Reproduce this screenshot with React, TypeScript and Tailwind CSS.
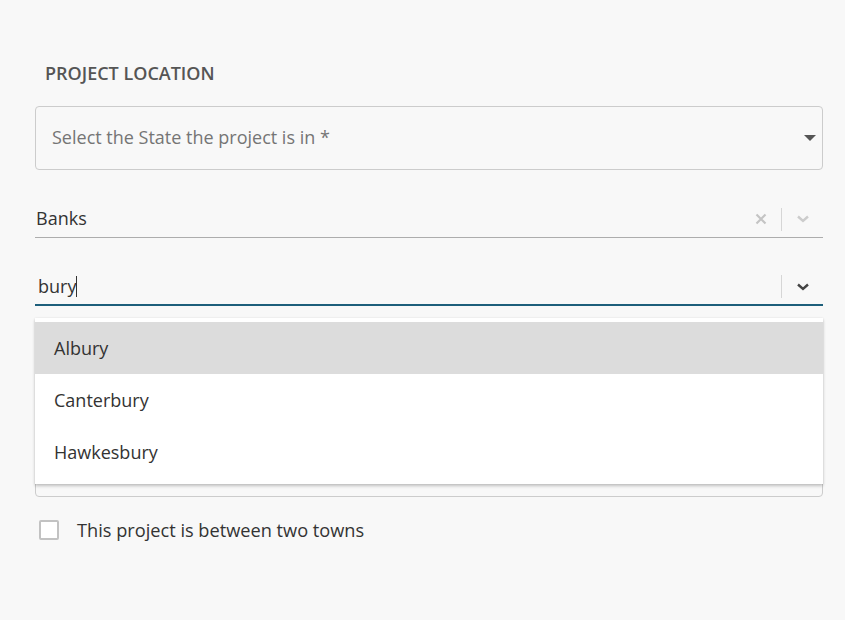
import React from "react";

const Chevron = ({ color }: { color: string }) => (
  <svg width="14" height="10" viewBox="0 0 14 10" fill="none">
    <path d="M2 2.5 L7 7 L12 2.5" stroke={color} strokeWidth="2.4" />
  </svg>
);

export default function App() {
  return (
    <div
      className="w-[845px] h-[620px] bg-[#f8f8f8] pl-[35px] pr-[22px] pt-[62px]"
      style={{ fontFamily: '"Open Sans", "Noto Sans", sans-serif' }}
    >
      <h2 className="pl-[10px] text-[18px] font-semibold text-[#555555] leading-[22px]">
        PROJECT LOCATION
      </h2>

      <div className="mt-[22px] h-[64px] rounded-[4px] border border-[#cccccc] flex items-center pl-[16px] pr-[6px]">
        <span className="flex-1 text-[18px] text-[#757575] leading-[24px] -mt-[2px]">Select the State the project is in *</span>
        <svg width="12" height="7" viewBox="0 0 12 7">
          <path d="M0 0 L12 0 L6 6 Z" fill="#555555" />
        </svg>
      </div>

      <div className="mt-[31px] h-[37px] border-b border-[#adadad] flex items-center">
        <span className="flex-1 pl-[1px] text-[18px] text-[#333333] leading-[24px] -mt-[2px]">Banks</span>
        <svg width="12" height="12" viewBox="0 0 12 12" className="mr-[14px]">
          <path d="M1.5 1.5 L10.5 10.5 M10.5 1.5 L1.5 10.5" stroke="#c4c4c4" strokeWidth="2.2" />
        </svg>
        <div className="w-px h-[23px] bg-[#d6d6d6]" />
        <div className="w-[41px] flex justify-center">
          <Chevron color="#cccccc" />
        </div>
      </div>

      <div className="relative">
        <div className="mt-[31px] h-[37px] border-b-2 border-[#1d5f7b] flex items-center">
          <span className="flex-1 pl-[3px] text-[18px] text-[#333333]">
            bury<span className="inline-block w-px h-[21px] bg-[#333] align-[-4px]" />
          </span>
          <div className="w-px h-[23px] bg-[#d6d6d6]" />
          <div className="w-[41px] flex justify-center">
            <Chevron color="#444444" />
          </div>
        </div>

        <div className="absolute left-0 right-0 top-[49px] z-10 bg-white pt-[4px] pb-[6px] shadow-[0_2px_3px_rgba(0,0,0,0.22),0_0_2px_rgba(0,0,0,0.08)]">
          <div className="h-[52px] bg-[#dcdcdc] flex items-center pl-[19px] text-[18px] text-[#333333]">Albury</div>
          <div className="h-[52px] flex items-center pl-[19px] text-[18px] text-[#333333]">Canterbury</div>
          <div className="h-[52px] flex items-center pl-[19px] text-[18px] text-[#333333]">Hawkesbury</div>
        </div>

        <div className="mt-[127px] h-[64px] rounded-[4px] border border-[#cccccc]" />
      </div>

      <label className="mt-[21px] flex items-center">
        <span className="ml-[4px] w-[20px] h-[20px] rounded-[2px] border-2 border-[#c2c2c2] bg-white" />
        <span className="ml-[18px] text-[18.2px] text-[#333333] leading-[24px]">This project is between two towns</span>
      </label>
    </div>
  );
}
